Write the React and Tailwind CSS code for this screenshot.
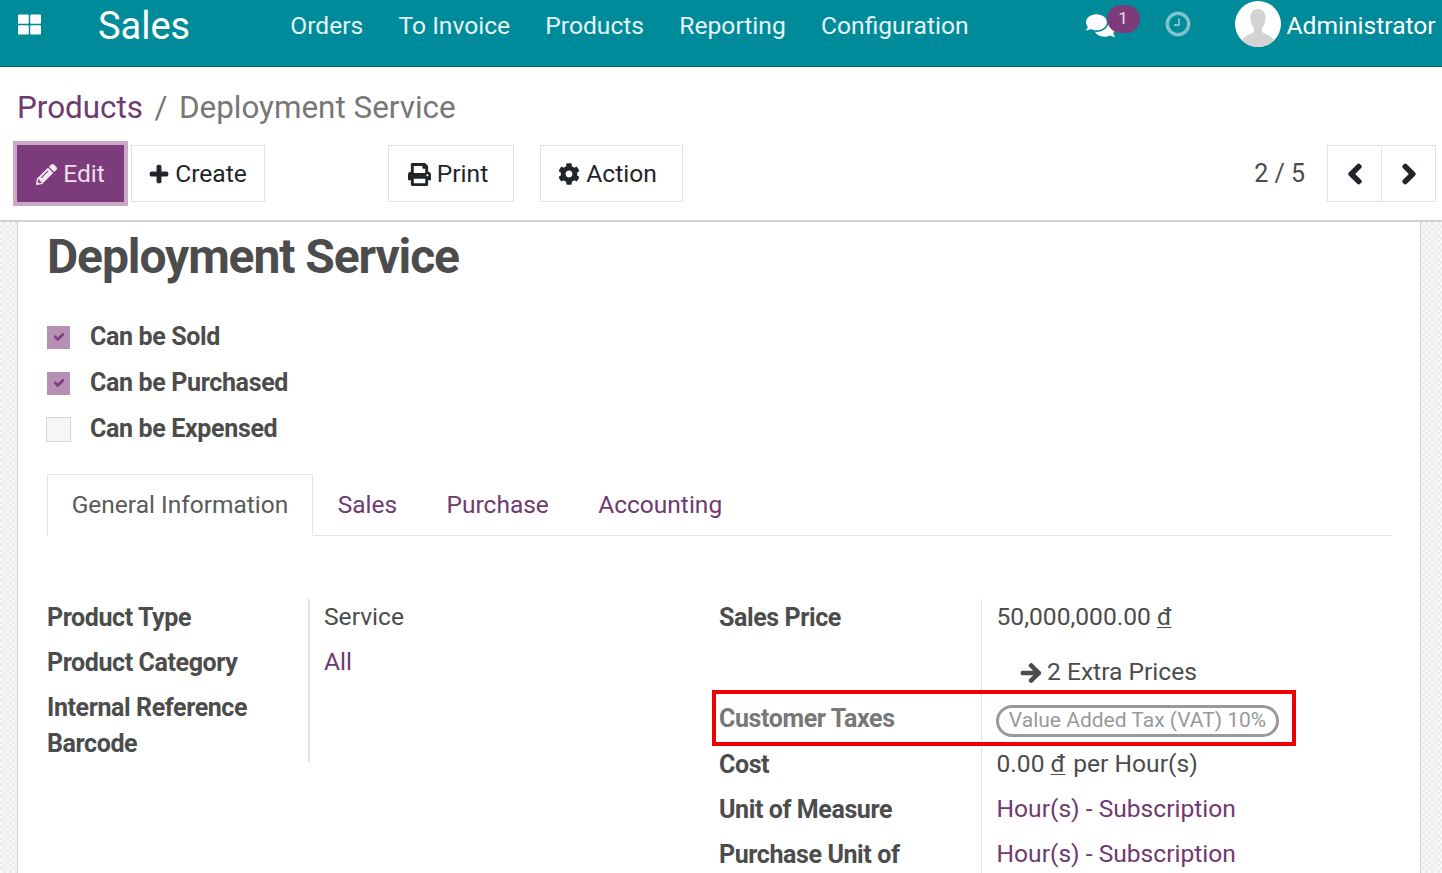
import { FaArrowRight, FaCheck, FaChevronLeft, FaChevronRight, FaCog, FaComments, FaPencilAlt, FaPlus, FaPrint, FaThLarge } from "react-icons/fa";

const navItems = ["Orders", "To Invoice", "Products", "Reporting", "Configuration"];
const tabs = ["Sales", "Purchase", "Accounting"];

const ToolButton = ({ icon, label, className = "" }) => (
  <button className={`flex h-[57px] items-center justify-center gap-[6px] border border-[#dee2e6] bg-white pt-[1px] text-[24.6px] text-[#212529] ${className}`}>
    {icon}
    {label}
  </button>
);

const CheckRow = ({ checked, label }) => (
  <div className="flex h-[46px] items-center">
    {checked ? (
      <span className="mr-[20px] flex h-[23px] w-[23px] items-center justify-center bg-[#b690b2] text-[#7c3c7c]">
        <FaCheck size={10} stroke="currentColor" strokeWidth={50} />
      </span>
    ) : (
      <span className="-ml-[1px] mr-[19px] h-[25px] w-[25px] border border-[#d5d5d5] bg-[#f6f6f6]" />
    )}
    <span className="text-[25px] font-bold tracking-[-0.35px] text-[#4c4c4c]">{label}</span>
  </div>
);

const Label = ({ children, className = "" }) => (
  <div className={`text-[25px] font-bold tracking-[-0.4px] text-[#4c4c4c] ${className}`}>{children}</div>
);

const Dong = () => <span className="underline decoration-1 underline-offset-2">đ</span>;

export default function App() {
  return (
    <div className="relative h-[873px] overflow-hidden bg-white font-['Roboto',sans-serif] text-[#4c4c4c]">
      {/* top bar */}
      <nav className="flex h-[67px] items-start border-b border-[#00606c] bg-[#008b9b] text-white">
        <FaThLarge size={23} className="ml-[18px] mt-[13px]" />
        <span className="ml-[57px] mt-[2px] text-[38px] leading-[48px]">Sales</span>
        <div className="ml-[100px] mt-[9px] flex gap-[35.3px] text-[24.6px] leading-[34px] text-[#e6f3f5]">
          {navItems.map((item) => (
            <span key={item}>{item}</span>
          ))}
        </div>
        <div className="relative ml-[117px] mt-[11px]">
          <FaComments size={29} />
          <span className="absolute left-[21px] top-[-6px] flex h-[28px] w-[33px] items-center justify-center rounded-full bg-[#7c3c7c] text-[17px] text-[#e8dce8]">1</span>
        </div>
        <svg viewBox="0 0 26 26" fill="none" stroke="#7fc4cd" className="ml-[50px] mt-[11px] h-[26px] w-[26px]">
          <circle cx="13" cy="13" r="10.7" strokeWidth="3.4" />
          <path d="M14 7.500v6.500H9" strokeWidth="1.800" />
        </svg>
        <svg viewBox="0 0 46 46" className="ml-[44px] mt-[1px] h-[46px] w-[46px]">
          <circle cx="23" cy="23" r="23" fill="#fff" />
          <path d="M23 8c-6 0-8 5-7.500 10 .3 4 1.500 7 3.500 9v4c-3 2.500-9 3-12 8 4 4.500 10 7 16 7s12-2.500 16-7c-3-5-9-5.500-12-8v-4c2-2 3.200-5 3.500-9C31 13 29 8 23 8z" fill="#d3d3d3" />
        </svg>
        <span className="ml-[6px] mt-[9px] text-[24.6px] leading-[34px]">Administrator</span>
      </nav>

      {/* control panel */}
      <header className="h-[155px] border-b-2 border-[#cfd2d4]">
        <div className="ml-[17px] pt-[21px] text-[31.4px] leading-[40px] text-[#777]">
          <span className="text-[#6f3a6f]">Products</span>
          <span className="mx-[11.5px]">/</span>
          Deployment Service
        </div>
        <div className="mt-[17px] flex items-center pr-[6px]">
          <button className="ml-[17px] flex h-[57px] w-[107px] items-center justify-center gap-[6px] bg-[#7c3c7c] pt-[1px] text-[24.6px] text-[#eadfea] outline-[4.500px] outline-[#c9a9c7]">
            <FaPencilAlt size={21} className="text-[#f3e9f3]" />
            Edit
          </button>
          <ToolButton className="ml-[7px] w-[134px]" icon={<FaPlus size={20} stroke="currentColor" strokeWidth={30} />} label="Create" />
          <ToolButton className="ml-[123px] w-[126px] pr-[6px]" icon={<FaPrint size={23} />} label="Print" />
          <ToolButton className="ml-[26px] w-[143px] pr-[8px]" icon={<FaCog size={22} />} label="Action" />
          <span className="ml-auto mr-[22px] text-[25px] text-[#4c4c4c]">2 / 5</span>
          <div className="flex h-[57px] w-[109px] border border-[#dee2e6] text-[#212529]">
            <span className="flex flex-1 items-center justify-center border-r border-[#dee2e6]"><FaChevronLeft size={22} stroke="currentColor" strokeWidth={50} /></span>
            <span className="flex flex-1 items-center justify-center"><FaChevronRight size={22} stroke="currentColor" strokeWidth={50} /></span>
          </div>
        </div>
      </header>

      {/* form sheet */}
      <div className="flex h-[700px] bg-[repeating-conic-gradient(#ececec_0_25%,#f8f8f8_0_50%)] bg-[length:6px_6px]">
        <main className="ml-[17px] h-full w-[1404px] border-x border-[#d5d5d5] bg-white pl-[29px] pr-[29px]">
          <h1 className="mt-[7px] text-[48px] font-bold leading-[56px] tracking-[-1.1px] text-[#4c4c4c]">Deployment Service</h1>

          <div className="mt-[29px]">
            <CheckRow checked label="Can be Sold" />
            <CheckRow checked label="Can be Purchased" />
            <CheckRow label="Can be Expensed" />
          </div>

          <div className="mt-[22px] flex h-[62px] border-b border-[#e3e3e3] text-[24.5px]">
            <div className="z-10 flex h-[62px] w-[266px] items-center justify-center border border-b-white border-[#e3e3e3] bg-white pt-[1px] text-[#5a5a5a]">General Information</div>
            {tabs.map((tab) => (
              <div key={tab} className="flex items-center px-[24.7px] pt-[1px] text-[#6f3a6f]">{tab}</div>
            ))}
          </div>

          <div className="mt-[63px] flex items-start">
            {/* left group */}
            <div className="grid w-[672px] grid-cols-[263px_1fr]">
              <div className="border-r-2 border-[#e3e3e3]">
                <Label className="flex h-[37px] items-center">Product Type</Label>
                <Label className="mt-[8px] flex h-[37px] items-center">Product Category</Label>
                <Label className="mt-[8px] flex h-[37px] items-center">Internal Reference</Label>
                <Label className="flex h-[36px] items-center">Barcode</Label>
              </div>
              <div className="pl-[14px] text-[24.6px]">
                <div className="flex h-[37px] items-center">Service</div>
                <div className="mt-[8px] flex h-[37px] items-center text-[#6f3a6f]">All</div>
              </div>
            </div>

            {/* right group */}
            <div className="grid flex-1 grid-cols-[263px_1fr]">
              <div className="border-r border-[#e3e3e3]">
                <Label className="flex h-[37px] items-center">Sales Price</Label>
                <Label className="mt-[64px] flex h-[37px] items-center text-[#777]">Customer Taxes</Label>
                <Label className="mt-[9px] flex h-[37px] items-center">Cost</Label>
                <Label className="mt-[8px] flex h-[37px] items-center">Unit of Measure</Label>
                <Label className="mt-[8px] flex h-[37px] items-center">Purchase Unit of</Label>
              </div>
              <div className="pl-[14.5px] text-[24.6px]">
                <div className="flex h-[37px] items-center">50,000,000.00&nbsp;<Dong /></div>
                <div className="mt-[18px] flex h-[37px] items-center gap-[5px] pl-[23.5px]">
                  <FaArrowRight size={22} stroke="currentColor" strokeWidth={30} />
                  2 Extra Prices
                </div>
                <div className="mt-[10px] flex h-[37px] items-center">
                  <span className="-ml-[0.5px] mt-[2px] flex h-[32px] w-[283px] items-center justify-center rounded-full border-[3.500px] border-[#999] text-[21px] text-[#999]">Value Added Tax (VAT) 10%</span>
                </div>
                <div className="mt-[8px] flex h-[37px] items-center">0.00&nbsp;<Dong /><span className="ml-[8px]">per Hour(s)</span></div>
                <div className="mt-[8px] flex h-[37px] items-center text-[#6f3a6f]">Hour(s) - Subscription</div>
                <div className="mt-[8px] flex h-[37px] items-center text-[#6f3a6f]">Hour(s) - Subscription</div>
              </div>
            </div>
          </div>
        </main>
      </div>

      {/* red annotation */}
      <div className="absolute left-[712px] top-[690px] h-[56px] w-[584px] border-[4px] border-[#ee0000]" />
    </div>
  );
}
